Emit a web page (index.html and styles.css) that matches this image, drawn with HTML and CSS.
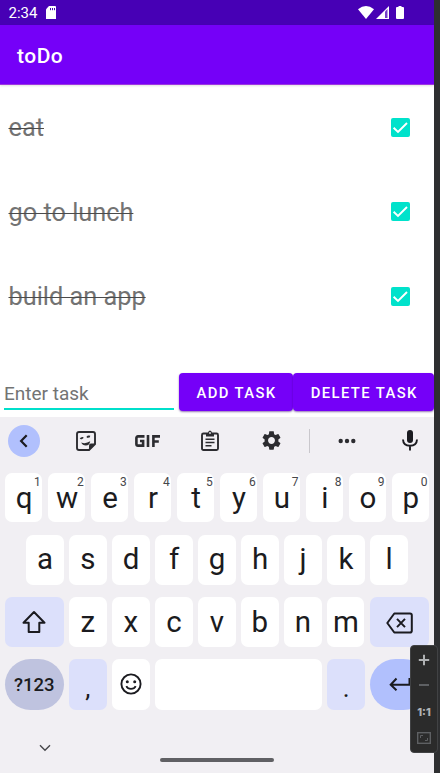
FILE: index.html
```html
<!DOCTYPE html>
<html lang="en">
<head>
<meta charset="utf-8">
<title>toDo</title>
<link rel="stylesheet" href="styles.css">
</head>
<body>
<main class="screen">
  <header class="status">
    <span class="clock">2:34</span>
    <svg class="sd" width="10" height="13" viewBox="0 0 10 13"><path fill="#fff" d="M3 0h6q1 0 1 1v12H0V3.200z"/><path stroke="#4700b5" d="M4.500 2v2.200M6.500 2v2.200M8.500 2v2.200"/></svg>
    <span class="grow"></span>
    <svg class="wifi" width="16" height="13" viewBox="0 0 16 13"><path fill="#fff" d="M0 3.200Q8-3.200 16 3.200L8 13z"/></svg>
    <svg class="signal" width="13" height="13" viewBox="0 0 13 13"><path fill="#fff" d="M0 13 13 0v13z"/><path fill="#4700b5" d="M9 5.500 11.500 3v9H9z" opacity=".75"/></svg>
    <svg class="battery" width="8" height="13" viewBox="0 0 8 13"><path fill="#fff" d="M2.500 0h3v1H7q1 0 1 1v10q0 1-1 1H1q-1 0-1-1V2q0-1 1-1h1.500z"/></svg>
  </header>
  <div class="appbar"><h1>toDo</h1></div>
  <ul class="tasks">
    <li><s>eat</s><svg class="check" viewBox="0 0 19 19"><rect width="19" height="19" rx="2" fill="#00e2cb"/><path d="m2.600 9.800 4.400 4.200 9-9" fill="none" stroke="#fff" stroke-width="1.900"/></svg></li>
    <li><s>go to lunch</s><svg class="check" viewBox="0 0 19 19"><rect width="19" height="19" rx="2" fill="#00e2cb"/><path d="m2.600 9.800 4.400 4.200 9-9" fill="none" stroke="#fff" stroke-width="1.900"/></svg></li>
    <li><s>build an app</s><svg class="check" viewBox="0 0 19 19"><rect width="19" height="19" rx="2" fill="#00e2cb"/><path d="m2.600 9.800 4.400 4.200 9-9" fill="none" stroke="#fff" stroke-width="1.900"/></svg></li>
  </ul>
  <div class="entry">
    <div class="field">Enter task</div>
    <button class="btn add">ADD TASK</button>
    <button class="btn delete">DELETE TASK</button>
  </div>
  <section class="keyboard">
    <div class="tools">
      <span class="back"><svg width="32" height="32" viewBox="0 0 32 32"><path d="m18.700 10.300-5.600 5.700 5.600 5.700" fill="none" stroke="#1b1b20" stroke-width="2.200"/></svg></span>
      <svg class="sticker" width="20" height="20" viewBox="0 0 20 20"><path d="M3 1h14q2 0 2 2v10l-6 6H3q-2 0-2-2V3q0-2 2-2z" fill="none" stroke="#2c2c30" stroke-width="1.900"/><path d="M19.500 12.500H15q-2 0-2 2v5z" fill="#2c2c30"/><path d="M5.200 11.500q4.500 1.700 9-1.200-.6 4.200-4.300 4.200-3.500 0-4.700-3z" fill="#2c2c30"/><path d="M4.500 8q1-1.600 2.800-1M11 6.500q1.200-1.500 3-.8" fill="none" stroke="#2c2c30" stroke-width="1.800"/></svg>
      <svg class="gif" width="26" height="12" viewBox="0 0 26 12"><path d="M9.500 1.400H3Q1.400 1.400 1.400 3v6q0 1.600 1.600 1.600h5.100V6H5M13 0v12M18.400 12V1.400H25M18.400 6.500h5.400" fill="none" stroke="#2c2c30" stroke-width="2.600"/></svg>
      <svg class="clip" width="18" height="21" viewBox="0 0 18 21"><path d="M2.500 3.500h13q1.500 0 1.500 1.500v13.500q0 1.500-1.500 1.500h-13Q1 20 1 18.500V5q0-1.500 1.500-1.500z" fill="none" stroke="#2c2c30" stroke-width="1.900"/><path d="M5 3h2q.3-2.500 2-2.500T11 3h2v3.500H5z" fill="#2c2c30"/><circle cx="9" cy="3" r=".9" fill="#f1eff3"/><path d="M4.500 9.300h9M4.500 12.500h9M4.500 15.700h6" stroke="#2c2c30" stroke-width="1.600"/></svg>
      <svg class="gear" width="23" height="23" viewBox="0 0 24 24"><path fill="#2c2c30" d="M19.140 12.940c.040-.3.060-.61.060-.94 0-.32-.020-.64-.070-.94l2.030-1.580c.18-.14.230-.41.120-.61l-1.920-3.320c-.12-.22-.37-.29-.59-.22l-2.390.96c-.5-.38-1.030-.7-1.620-.94l-.36-2.540c-.040-.24-.24-.41-.48-.41h-3.840c-.24 0-.43.170-.47.410l-.36 2.540c-.59.240-1.130.570-1.620.94l-2.390-.96c-.22-.080-.47 0-.59.220L2.740 8.870c-.12.210-.080.470.120.610l2.030 1.580c-.050.300-.090.630-.090.940s.020.640.070.940l-2.030 1.580c-.18.140-.23.410-.12.610l1.920 3.320c.12.220.37.290.59.220l2.390-.96c.5.380 1.030.7 1.620.94l.36 2.540c.050.240.240.410.480.410h3.840c.24 0 .44-.17.470-.41l.36-2.540c.59-.24 1.130-.56 1.620-.94l2.390.96c.22.080.47 0 .59-.22l1.920-3.320c.12-.22.070-.47-.12-.61l-2.010-1.580zM12 15.600c-1.980 0-3.600-1.620-3.600-3.600s1.620-3.600 3.600-3.600 3.600 1.620 3.600 3.600-1.620 3.600-3.600 3.600z"/></svg>
      <span class="divider"></span>
      <svg class="more" width="18" height="6" viewBox="0 0 18 6"><g fill="#2c2c30"><circle cx="2.700" cy="3" r="2.200"/><circle cx="9" cy="3" r="2.200"/><circle cx="15.300" cy="3" r="2.200"/></g></svg>
      <svg class="mic" width="16" height="21" viewBox="0 0 16 21"><rect x="5" y="0" width="6" height="13" rx="3" fill="#1b1b20"/><path d="M1 9.500q.3 6.300 7 6.300t7-6.300M8 16v4.500" fill="none" stroke="#1b1b20" stroke-width="1.900"/></svg>
    </div>
    <div class="row r1">
      <div class="key">q<sup>1</sup></div><div class="key">w<sup>2</sup></div><div class="key">e<sup>3</sup></div><div class="key">r<sup>4</sup></div><div class="key">t<sup>5</sup></div><div class="key">y<sup>6</sup></div><div class="key">u<sup>7</sup></div><div class="key">i<sup>8</sup></div><div class="key">o<sup>9</sup></div><div class="key">p<sup>0</sup></div>
    </div>
    <div class="row r2">
      <div class="key">a</div><div class="key">s</div><div class="key">d</div><div class="key">f</div><div class="key">g</div><div class="key">h</div><div class="key">j</div><div class="key">k</div><div class="key">l</div>
    </div>
    <div class="row r3">
      <div class="key wide tint"><svg width="26" height="24" viewBox="0 0 26 24"><path d="M13 2 2.500 12.700H7.700V22h10.600v-9.300h5.200z" fill="none" stroke="#1b1b20" stroke-width="2" stroke-linejoin="round"/></svg></div>
      <div class="key">z</div><div class="key">x</div><div class="key">c</div><div class="key">v</div><div class="key">b</div><div class="key">n</div><div class="key">m</div>
      <div class="key wide tint del"><svg width="27" height="22" viewBox="0 0 27 22"><path d="M8.300 1.500H24q1.800 0 1.800 1.800v15.400q0 1.800-1.800 1.800H8.300L1.300 11z" fill="none" stroke="#1b1b20" stroke-width="2" stroke-linejoin="round"/><path d="m11 6.900 8 8.200m0-8.200-8 8.200" stroke="#1b1b20" stroke-width="2"/></svg></div>
    </div>
    <div class="row r4">
      <div class="key wide symbols">?123</div>
      <div class="key tint punct">,</div>
      <div class="key"><svg width="22" height="22" viewBox="0 0 22 22"><circle cx="11" cy="11" r="9.600" fill="none" stroke="#1b1b20" stroke-width="1.900"/><circle cx="7.300" cy="8.700" r="1.500" fill="#1b1b20"/><circle cx="14.700" cy="8.700" r="1.500" fill="#1b1b20"/><path d="M6.300 13.200q1.400 2.700 4.700 2.700t4.700-2.700" fill="none" stroke="#1b1b20" stroke-width="1.800"/></svg></div>
      <div class="key space"></div>
      <div class="key tint punct">.</div>
      <div class="key wide enter"><svg width="22" height="14" viewBox="0 0 22 14"><path d="M20.500 1v6.800H2M7.500 1.500 1.700 7.800l5.800 5.500" fill="none" stroke="#1b1b20" stroke-width="2"/></svg></div>
    </div>
    <div class="nav">
      <svg width="12" height="8" viewBox="0 0 12 8"><path d="m1 1.200 5 5 5-5" fill="none" stroke="#46464a" stroke-width="1.400"/></svg>
      <span class="pill"></span>
    </div>
  </section>
</main>
<aside class="zoom">
  <svg width="12" height="12" viewBox="0 0 12 12"><path d="M6 .8v10.400M.8 6h10.400" stroke="#afb1b3" stroke-width="2"/></svg>
  <svg width="12" height="12" viewBox="0 0 12 12"><path d="M1 6h10" stroke="#5e6063" stroke-width="2"/></svg>
  <span>1:1</span>
  <svg width="14" height="12" viewBox="0 0 14 12"><rect x=".7" y=".7" width="12.600" height="10.600" fill="none" stroke="#5e6063" stroke-width="1.400"/><path d="M3.500 6V3.500H6M8 8.500h2.500V6" fill="none" stroke="#5e6063"/></svg>
</aside>
</body>
</html>
```
FILE: styles.css
```css
* { box-sizing: border-box; }
body {
  margin: 0;
  width: 440px;
  height: 773px;
  overflow: hidden;
  position: relative;
  background: #2e2f31;
  font-family: Roboto, "Liberation Sans", sans-serif;
}
svg { display: block; flex: none; }
.screen {
  width: 434px;
  height: 773px;
  display: flex;
  flex-direction: column;
  background: #fff;
}
.status {
  height: 25px;
  flex: none;
  display: flex;
  align-items: center;
  padding: 0 30px 0 8.500px;
  background: #4700b5;
  color: #fff;
}
.clock { width: 30px; font-size: 15px; line-height: 25px; padding-top: 2px; }
.sd { margin-left: 7.500px; }
.grow { flex: 1; }
.signal { margin-left: 2px; }
.battery { margin-left: 7px; }
.appbar {
  height: 60px;
  flex: none;
  padding-left: 17px;
  background: #7500f8;
  border-bottom: 1px solid #9d35e0;
  box-shadow: 0 1px 2px rgba(0, 0, 0, .12);
}
h1 {
  margin: 0;
  color: #fff;
  font-size: 21px;
  font-weight: 500;
  line-height: 62px;
  letter-spacing: .5px;
}
.tasks {
  margin: 0;
  padding: 0;
  height: 288px;
  flex: none;
  list-style: none;
}
.tasks li {
  height: 84.500px;
  display: flex;
  align-items: center;
  justify-content: space-between;
  padding: 0 24.500px 0 8.500px;
}
s {
  color: #737373;
  font-size: 25.300px;
  line-height: 32px;
  padding-top: 2px;
  text-decoration: line-through 1px #4a4a4a;
}
.check { width: 19px; height: 19px; }
.entry {
  height: 44px;
  flex: none;
  display: flex;
  align-items: flex-start;
  padding-left: 4px;
}
.field {
  width: 170px;
  height: 37px;
  margin-right: 4.500px;
  border-bottom: 2px solid #00dfcb;
  color: #737373;
  font-size: 19px;
  line-height: 42px;
}
.btn {
  height: 38px;
  padding: 2px 0 0 2px;
  border: 0;
  border-radius: 4px;
  background: #7500f8;
  box-shadow: 0 1px 2px rgba(60, 0, 120, .55);
  color: #fff;
  font: 500 14.800px/36px Roboto, sans-serif;
  letter-spacing: 1.400px;
}
.add { width: 114px; }
.delete { width: 141.500px; }
.keyboard {
  flex: 1;
  display: flex;
  flex-direction: column;
  background: #f1eff3;
}
.tools {
  height: 56px;
  flex: none;
  display: flex;
  align-items: center;
  padding: 0 16px 9px 8px;
}
.back { width: 32px; height: 32px; border-radius: 50%; background: #b1c0fd; }
.sticker { margin-left: 36px; }
.gif { margin-left: 39px; }
.clip { margin-left: 39.500px; }
.gear { margin-left: 41.500px; }
.divider { width: 1px; height: 24px; margin-left: 26px; background: #c9c7cc; }
.more { margin-left: 28px; }
.mic { margin-left: auto; }
.row { display: flex; gap: 5.700px; padding: 0 5px; flex: none; }
.r1 { height: 49px; margin-bottom: 13px; }
.r2 { height: 50px; padding: 0 26.300px; margin-bottom: 12px; }
.r3 { height: 50px; margin-bottom: 12px; }
.r4 { height: 51px; }
.key {
  flex: 1 1 0;
  min-width: 0;
  position: relative;
  display: flex;
  align-items: center;
  justify-content: center;
  padding-bottom: 2px;
  border-radius: 7px;
  background: #fff;
  color: #1b1b20;
  font-size: 29.500px;
}
.key sup {
  position: absolute;
  top: 2px;
  right: 1.500px;
  color: #46464a;
  font-size: 12px;
  line-height: 14px;
}
.r1 .key { padding: 0 0 0 1px; }
.r3 .key, .r4 .key { flex: 0 0 37.300px; padding-bottom: 1px; }
.r3 .wide, .r4 .wide { flex: 0 0 58.600px; }
.r3 .del { padding-bottom: 0; padding-top: 2px; }
.r4 .space { flex: 1 1 0; }
.tint { background: #dce0fb; }
.r4 .symbols { border-radius: 26px; background: #bfc3df; font-size: 18.500px; font-weight: 500; padding-top: 2px; }
.r4 .enter { border-radius: 26px; background: #b1c0fd; }
.punct { font-size: 26px; padding-top: 8px; }
.nav {
  flex: 1;
  display: flex;
  align-items: flex-start;
  padding: 34px 0 0 39px;
}
.pill { width: 114px; height: 4px; margin: 14px 0 0 109px; border-radius: 2px; background: #606064; }
.zoom {
  position: absolute;
  left: 410px;
  top: 645px;
  width: 28px;
  height: 108px;
  border: 1px solid #414244;
  border-radius: 4px;
  background: #2b2b2b;
  display: flex;
  flex-direction: column;
  align-items: center;
  justify-content: space-between;
  padding: 8px 0;
}
.zoom span { color: #afb1b3; font: 800 11px/14px Inter, sans-serif; }
```
